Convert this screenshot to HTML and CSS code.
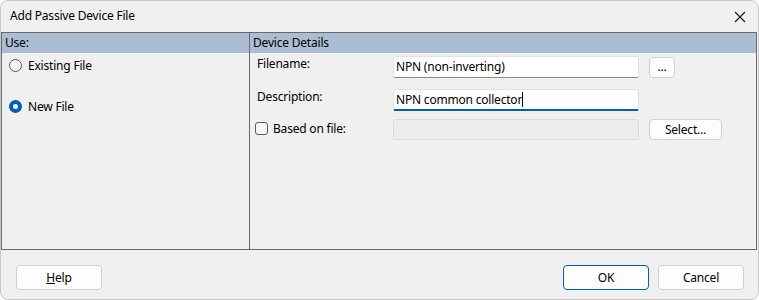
FILE: index.html
```html
<!DOCTYPE html>
<html lang="en">
<head>
    <meta charset="UTF-8">
    <title>Add Passive Device File</title>
    <link rel="stylesheet" href="styles.css">
</head>
<body>
    <div class="dialog">
        <div class="titlebar">
            <span class="title">Add Passive Device File</span>
            <svg class="close" width="12" height="12" viewBox="0 0 12 12">
                <path d="M1 1 L11 11 M11 1 L1 11" stroke="#1a1a1a" stroke-width="1.2" fill="none"/>
            </svg>
        </div>

        <div class="panel">
            <div class="col col-use">
                <div class="col-head">Use:</div>
                <div class="use-body">
                    <div class="radio-row first">
                        <span class="radio"></span>
                        <span>Existing File</span>
                    </div>
                    <div class="radio-row second">
                        <span class="radio checked"></span>
                        <span>New File</span>
                    </div>
                </div>
            </div>
            <div class="col col-details">
                <div class="col-head">Device Details</div>
                <div class="details-body">
                    <div class="row row-filename">
                        <span class="label">Filename:</span>
                        <div class="field">NPN (non-inverting)</div>
                        <button class="btn btn-small">...</button>
                    </div>
                    <div class="row row-desc">
                        <span class="label">Description:</span>
                        <div class="field focused">NPN common collector<span class="caret"></span></div>
                    </div>
                    <div class="row row-based">
                        <span class="label check-label"><span class="checkbox"></span>Based on file:</span>
                        <div class="field disabled"></div>
                        <button class="btn btn-select">Select...</button>
                    </div>
                </div>
            </div>
        </div>

        <div class="footer">
            <button class="btn btn-foot"><u>H</u>elp</button>
            <div class="footer-right">
                <button class="btn btn-foot btn-default">OK</button>
                <button class="btn btn-foot">Cancel</button>
            </div>
        </div>
    </div>
</body>
</html>
```

FILE: styles.css
```css
* {
    box-sizing: border-box;
}

body {
    margin: 0;
    background: #ffffff;
    font-family: 'Noto Sans', 'Open Sans', sans-serif;
    font-size: 12px;
    letter-spacing: -0.2px;
    color: #000000;
}

.dialog {
    width: 759px;
    height: 300px;
    background: #f0f0f0;
    border: 1px solid #c9c9c9;
    border-radius: 8px;
    display: flex;
    flex-direction: column;
    overflow: hidden;
}

.titlebar {
    height: 31px;
    display: flex;
    align-items: center;
    justify-content: space-between;
    padding: 0 9px 0 9px;
}

.title {
    margin-top: -2px;
}

.close {
    margin-right: 3px;
}

/* main panel */
.panel {
    display: flex;
    width: 756px;
    height: 218px;
    border: 1px solid #6a6a6a;
}

.col {
    display: flex;
    flex-direction: column;
}

.col-use {
    width: 248px;
    border-right: 1px solid #6a6a6a;
}

.col-details {
    flex: 1;
}

.col-head {
    height: 20px;
    line-height: 19px;
    background: #abbdd3;
    padding-left: 3px;
}

.use-body {
    padding-left: 7px;
}

.radio-row {
    display: flex;
    align-items: center;
    gap: 6px;
    height: 20px;
}

.radio-row.first {
    margin-top: 2px;
}

.radio-row.second {
    margin-top: 21px;
}

.radio {
    width: 13px;
    height: 13px;
    border: 1px solid #5c5c5c;
    border-radius: 50%;
    background: #f7f7f7;
}

.radio.checked {
    border: 4px solid #005fb8;
    background: #ffffff;
}

/* details */
.details-body {
    padding-left: 5px;
}

.row {
    display: flex;
    align-items: center;
    height: 22px;
}

.row-filename {
    margin-top: 3px;
}

.row-desc {
    margin-top: 11px;
}

.row-based {
    margin-top: 7px;
}

.label {
    width: 138px;
    padding-left: 2px;
    margin-top: -8px;
}

.check-label {
    display: flex;
    align-items: center;
    gap: 5px;
    padding-left: 0;
    margin-top: -1px;
}

.checkbox {
    width: 13px;
    height: 13px;
    border: 1px solid #5c5c5c;
    border-radius: 3px;
    background: #f7f7f7;
}

.field {
    width: 246px;
    height: 22px;
    background: #ffffff;
    border: 1px solid #e3e3e3;
    border-bottom-color: #8a8a8a;
    border-radius: 2px;
    padding: 0 2px;
    line-height: 20px;
    font-size: 12px;
}

.field.focused {
    border-bottom: 2px solid #005fb8;
}

.field.disabled {
    background: #ececec;
    border-color: #dcdcdc;
    height: 21px;
}

.caret {
    display: inline-block;
    width: 1px;
    height: 15px;
    background: #000000;
    vertical-align: -3px;
}

.btn {
    font-family: 'Noto Sans', 'Open Sans', sans-serif;
    font-size: 12px;
    letter-spacing: -0.2px;
    color: #000000;
    background: #fdfdfd;
    border: 1px solid #d0d0d0;
    border-radius: 4px;
    padding: 0;
}

.btn-small {
    width: 26px;
    height: 21px;
    margin-left: 10px;
    line-height: 12px;
}

.btn-select {
    width: 73px;
    height: 21px;
    margin-left: 10px;
}

/* footer */
.footer {
    flex: 1;
    display: flex;
    justify-content: space-between;
    align-items: flex-start;
    padding: 15px 14px 0 15px;
}

.footer-right {
    display: flex;
    gap: 9px;
}

.btn-foot {
    width: 86px;
    height: 25px;
}

.btn-default {
    border-color: #005fb8;
}
```
